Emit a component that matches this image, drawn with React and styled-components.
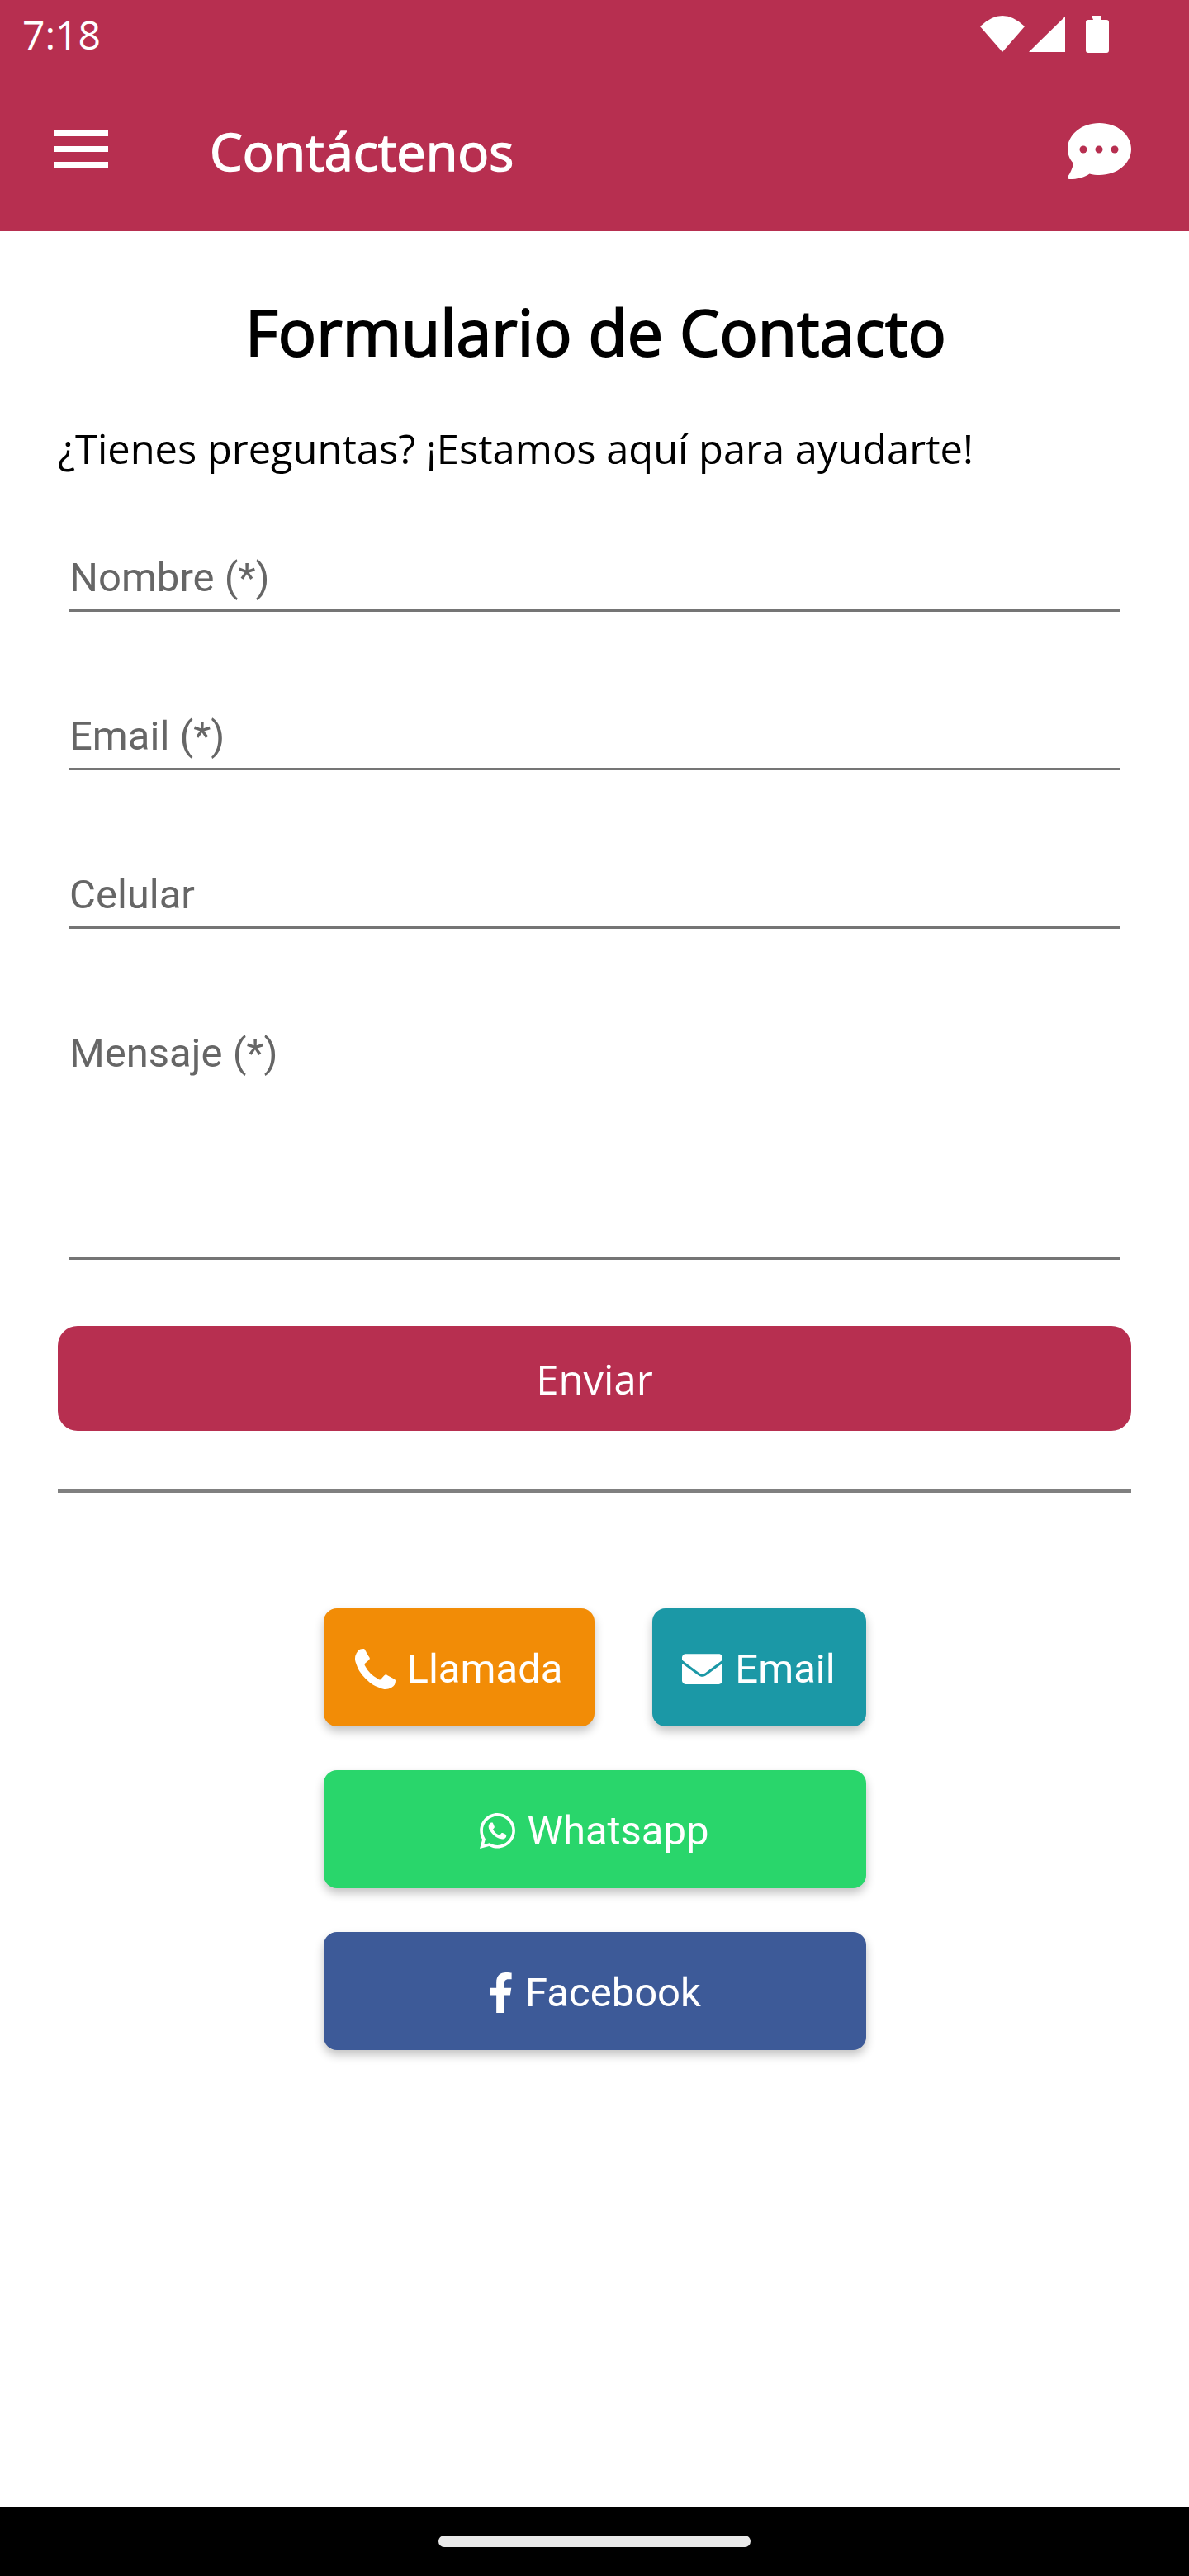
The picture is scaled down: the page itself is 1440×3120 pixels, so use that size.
import React from "react";
import styled, { createGlobalStyle } from "styled-components";
import { FaEnvelope, FaWhatsapp, FaFacebookF } from "react-icons/fa";

const Global = createGlobalStyle`
  html, body { margin: 0; padding: 0; background: #fff; }
  * { box-sizing: border-box; }
`;

const Page = styled.div`
  width: 1440px;
  height: 3120px;
  display: flex;
  flex-direction: column;
  background: #fff;
  font-family: "Open Sans", sans-serif;
`;

const Header = styled.header`
  height: 280px;
  flex: none;
  background: #b72f50;
  color: #fff;
  display: flex;
  flex-direction: column;
`;

const StatusBar = styled.div`
  height: 84px;
  padding: 10px 97px 0 27px;
  display: flex;
  justify-content: space-between;
  align-items: flex-start;
`;

const Clock = styled.span`
  font-size: 48px;
  line-height: 64px;
`;

const StatusIcons = styled.svg`
  width: 156px;
  height: 64px;
  display: block;
`;

const ToolBar = styled.div`
  height: 196px;
  display: flex;
  align-items: flex-start;
  padding: 65px 70px 0 65px;
`;

const MenuIcon = styled.svg`
  width: 66px;
  height: 45px;
  margin-top: 9px;
  flex: none;
`;

const AppTitle = styled.h1`
  margin: -8px 0 0 123px;
  flex: 1;
  font-size: 63px;
  line-height: 84px;
  font-weight: 400;
  -webkit-text-stroke: 1.5px #fff;
`;

const ChatIcon = styled.svg`
  width: 77px;
  height: 68px;
  flex: none;
`;

const Content = styled.main`
  flex: 1;
  padding: 0 70px;
  display: flex;
  flex-direction: column;
`;

const FormTitle = styled.h2`
  margin: 72px 0 0;
  padding-left: 3px;
  font-size: 77px;
  line-height: 100px;
  font-weight: 400;
  text-align: center;
  color: #000;
  -webkit-text-stroke: 2px #000;
`;

const Lead = styled.p`
  margin: 59px 0 0;
  font-size: 48.8px;
  line-height: 64px;
  color: #000;
`;

const Field = styled.div`
  margin: ${(p) => p.$top}px 14px 0;
  height: ${(p) => p.$height}px;
  border-bottom: 3px solid #757575;
  color: #666;
  font-family: "Roboto", sans-serif;
  font-size: 49px;
  line-height: 60px;
  padding-top: 62px;
`;

const SubmitButton = styled.div`
  margin-top: 80px;
  height: 127px;
  border-radius: 24px;
  background: #b72f50;
  color: #fff;
  font-size: 49px;
  display: flex;
  align-items: center;
  justify-content: center;
`;

const Divider = styled.hr`
  margin: 71px 0 0;
  border: 0;
  height: 4px;
  background: #808080;
`;

const Actions = styled.div`
  width: 657px;
  margin: 140px auto 0;
  display: grid;
  grid-template-columns: 328px 70px 259px;
  row-gap: 53px;
`;

const ActionButton = styled.div`
  grid-column: ${(p) => p.$column};
  height: 143px;
  padding-top: 3px;
  border-radius: 16px;
  background: ${(p) => p.$bg};
  color: #fff;
  font-family: "Roboto", sans-serif;
  font-size: 49px;
  box-shadow: 0 6px 12px rgba(0, 0, 0, 0.24);
  display: flex;
  align-items: center;
  justify-content: center;
  gap: ${(p) => p.$gap}px;
`;

const Phone = styled.svg`
  width: 49px;
  height: 49px;
  flex: none;
`;

const WhatsappIcon = styled(FaWhatsapp)`
  width: 43px;
  height: 49px;
  flex: none;
`;

const FacebookIcon = styled(FaFacebookF)`
  width: 31px;
  height: 49px;
  flex: none;
`;

const EnvelopeIcon = styled(FaEnvelope)`
  width: 49px;
  height: 49px;
  flex: none;
`;

const NavBar = styled.footer`
  height: 84px;
  flex: none;
  background: #000;
  display: flex;
  align-items: center;
  justify-content: center;
`;

const HomePill = styled.div`
  width: 378px;
  height: 14px;
  border-radius: 7px;
  background: #e9e9e9;
`;

export default function App() {
  return (
    <Page>
      <Global />
      <Header>
        <StatusBar>
          <Clock>7:18</Clock>
          <StatusIcons viewBox="0 0 156 64" fill="#fff">
            <path d="M0 22 Q27 -4 54 22 L27 53 Z" />
            <path d="M103 10 V53 H59 Z" />
            <path d="M135 9 h12 v5 h6 q3 0 3 3 v34 q0 3 -3 3 h-22 q-3 0 -3 -3 v-34 q0 -3 3 -3 h6 z" />
          </StatusIcons>
        </StatusBar>
        <ToolBar>
          <MenuIcon viewBox="0 0 66 45" fill="#fff">
            <rect width="66" height="7" y="0" />
            <rect width="66" height="7" y="19" />
            <rect width="66" height="7" y="38" />
          </MenuIcon>
          <AppTitle>Contáctenos</AppTitle>
          <ChatIcon viewBox="0 0 77 68">
            <path
              fill="#fff"
              d="M38.5 0C60 0 77 14 77 31.5S60 63 38.5 63c-4 0-8-.5-12-1.6C21 65.5 11 68 3 68c-2.5 0-3.5-1.5-2.5-3.5C3.5 60 6 54 7 49 2.5 44 0 38 0 31.5 0 14 17 0 38.5 0Z"
            />
            <g fill="#b72f50">
              <circle cx="19" cy="32" r="4.5" />
              <circle cx="38" cy="32" r="4.5" />
              <circle cx="57" cy="32" r="4.5" />
            </g>
          </ChatIcon>
        </ToolBar>
      </Header>
      <Content>
        <FormTitle>Formulario de Contacto</FormTitle>
        <Lead>¿Tienes preguntas? ¡Estamos aquí para ayudarte!</Lead>
        <Field $top={33} $height={133}>Nombre (*)</Field>
        <Field $top={59} $height={133}>Email (*)</Field>
        <Field $top={59} $height={133}>Celular</Field>
        <Field $top={59} $height={342}>Mensaje (*)</Field>
        <SubmitButton>Enviar</SubmitButton>
        <Divider />
        <Actions>
          <ActionButton $bg="#f28c06" $column="1" $gap={14}>
            <Phone viewBox="0 0 1408 1408" fill="#fff">
              <path d="M1408 1112q0 27-10 70.5t-21 68.5q-21 50-122 106-94 51-186 51-27 0-53-3.5t-57.5-12.5-47-14.5-55.5-20.5-49-18q-98-35-175-83-127-79-264-216t-216-264q-48-77-83-175-3-9-18-49t-20.5-55.5-14.5-47-12.5-57.5-3.5-53q0-92 51-186 56-101 106-122 25-11 68.5-21t70.5-10q14 0 21 3 18 6 53 76 11 19 30 54t35 63.5 31 53.5q3 4 17.5 25t21.5 35.5 7 28.5q0 20-28.5 50t-62 55-62 53-28.5 46q0 9 5 22.5t8.5 20.5 14 24 11.5 19q76 137 174 235t235 174q2 1 19 11.5t24 14 20.5 8.5 22.5 5q18 0 46-28.5t53-62 55-62 50-28.5q14 0 28.5 7t35.5 21.5 25 17.5q25 15 53.5 31t63.5 35 54 30q70 35 76 53 3 7 3 21z" />
            </Phone>
            Llamada
          </ActionButton>
          <ActionButton $bg="#1b98a6" $column="3" $gap={15}>
            <EnvelopeIcon />
            Email
          </ActionButton>
          <ActionButton $bg="#29d66b" $column="1 / 4" $gap={14}>
            <WhatsappIcon />
            Whatsapp
          </ActionButton>
          <ActionButton $bg="#3d5a98" $column="1 / 4" $gap={14}>
            <FacebookIcon />
            Facebook
          </ActionButton>
        </Actions>
      </Content>
      <NavBar>
        <HomePill />
      </NavBar>
    </Page>
  );
}
